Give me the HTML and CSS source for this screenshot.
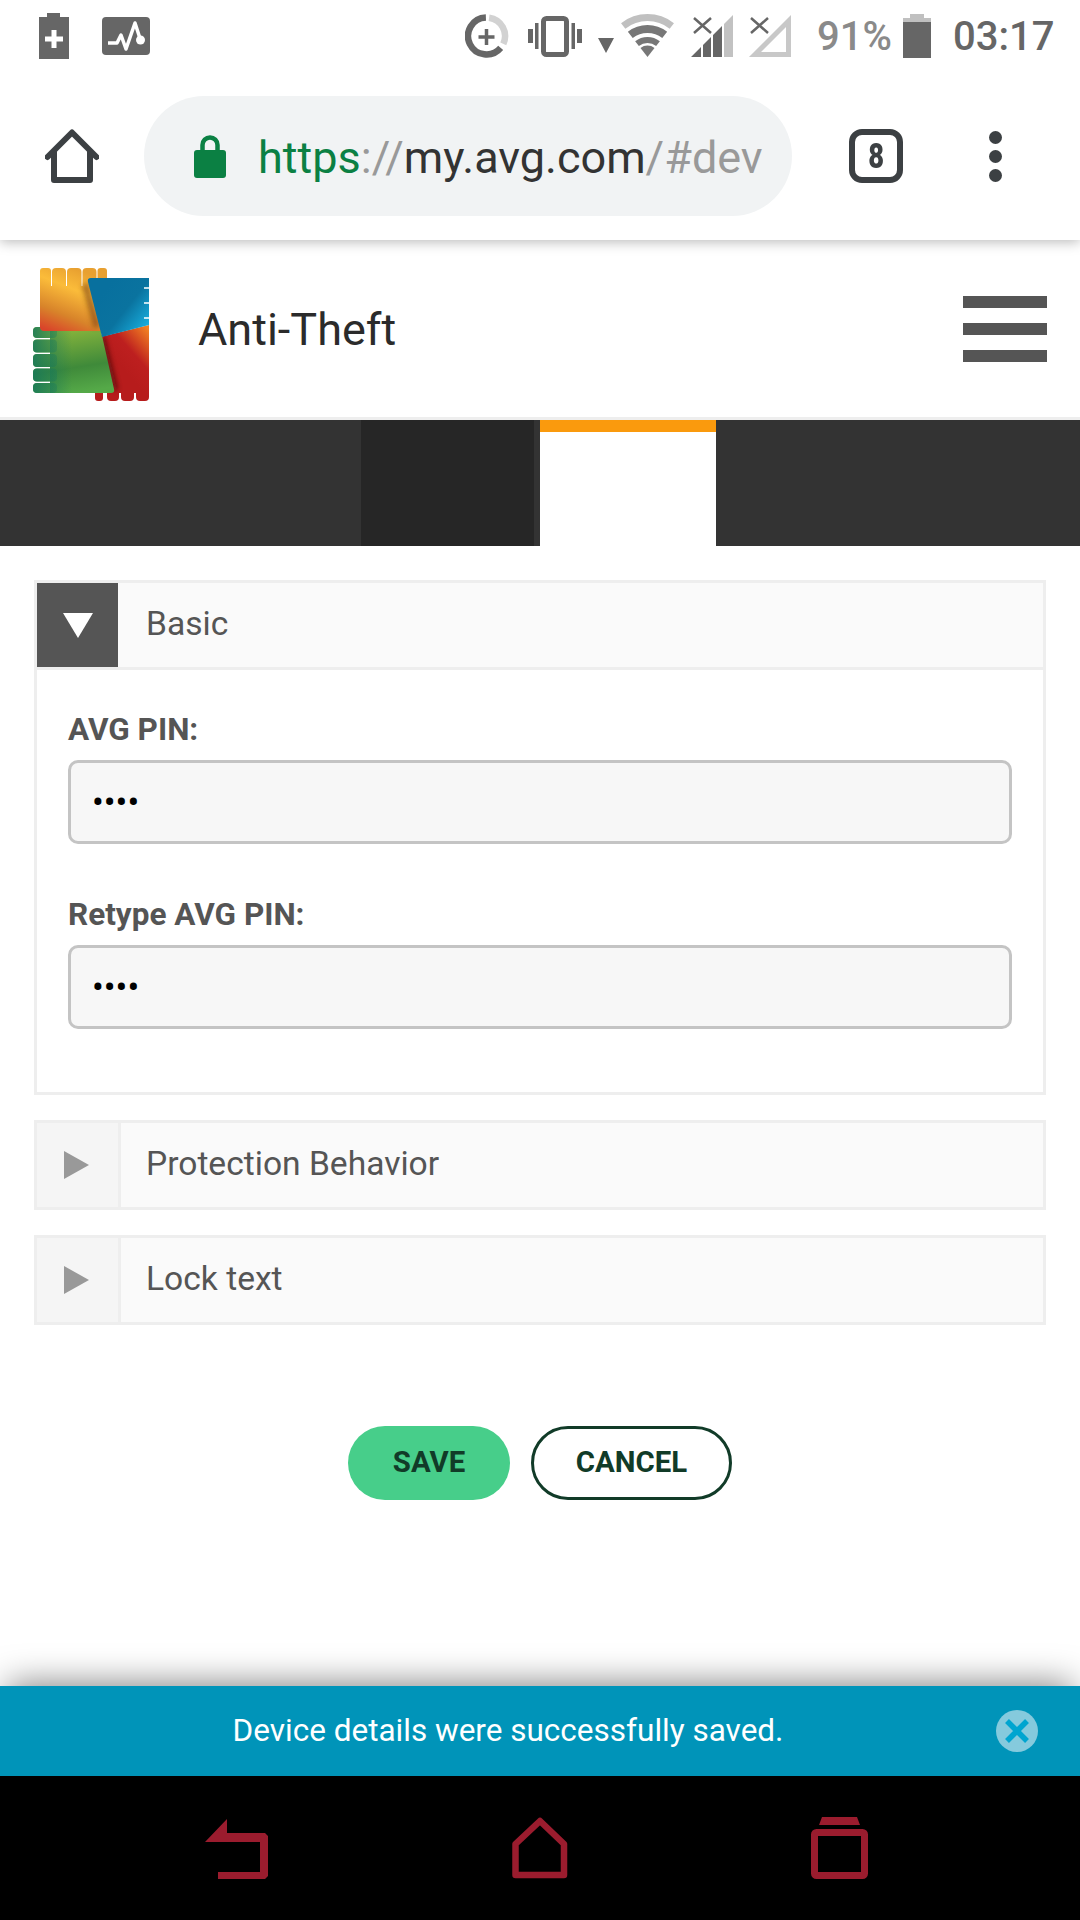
FILE: index.html
```html
<!doctype html>
<html>
    <head>
        <title>AVG Anti-Theft</title>
        <link rel="stylesheet" href="styles.css">
    </head>
    <body>
        <div class="status_bar">
            <svg class="status_left" viewBox="39 12 111 48">
                <path fill="#666" d="M47 13h13v4h9v42H39V17h8z"/>
                <path stroke="#fff" stroke-width="5" d="M54 30v18M45 39h18"/>
                <rect fill="#666" x="102" y="17" width="48" height="38" rx="4"/>
                <path fill="none" stroke="#fff" stroke-width="3.500" stroke-linejoin="round" d="M108 43h9l4-8 5 14 9-26 5.500 17"/>
                <circle fill="#fff" cx="140.500" cy="40" r="4.500"/>
            </svg>
            <svg class="status_icons" viewBox="465 12 326 48">
                <path fill="none" stroke="#666" stroke-width="6.500" d="M485.900 17.500A18.500 18.500 0 1 0 500.700 47.900"/>
                <path fill="none" stroke="#d2d2d2" stroke-width="6.500" d="M489.100 17.700A18.500 18.500 0 0 1 503.300 43.800"/>
                <path stroke="#666" stroke-width="3.500" d="M486.500 29v16M478.500 37h16"/>
                <rect fill="none" stroke="#666" stroke-width="5" x="543.500" y="18.500" width="23" height="36" rx="3"/>
                <path fill="#666" d="M528 29h5v14h-5zM535 23h3.500v26H535zM571.500 23h3.500v26h-3.500zM577 29h5v14h-5z"/>
                <path fill="#666" d="M598 38h16l-8 15z"/>
                <path fill="none" stroke="#c0c0c0" stroke-width="7" d="M623.200 25.900A39.500 39.500 0 0 1 671.800 25.900"/>
                <path fill="none" stroke="#777" stroke-width="8" d="M630.300 34.900A28 28 0 0 1 664.700 34.900"/>
                <path fill="none" stroke="#777" stroke-width="6" d="M637 43.600A17 17 0 0 1 658 43.600"/>
                <path fill="#777" d="M647.500 57l-7-9a11.500 11.500 0 0 1 14 0z"/>
                <path fill="#666" d="M691 57l10-10v10zM703 45l8-8v20h-8zM713 35l9-9v31h-9z"/>
                <path fill="#c2c2c2" d="M724 24l9-9v42h-9z"/>
                <path stroke="#666" stroke-width="2.500" d="M694 18l17 15M711 18l-17 15"/>
                <path fill="none" stroke="#c8c8c8" stroke-width="5" d="M755 54.500l33.500-33.500v33.500z"/>
                <path stroke="#666" stroke-width="2.500" d="M751 18l17 15M768 18l-17 15"/>
            </svg>
            <span class="status_pct">91%</span>
            <svg class="status_batt" viewBox="0 0 28 44">
                <path fill="#c0c0c0" d="M7 0h14v4h7v4H0V4h7z"/>
                <rect fill="#666" y="8" width="28" height="36"/>
            </svg>
            <span class="status_time">03:17</span>
        </div>

        <div class="toolbar">
            <svg class="tb_home" viewBox="45 129 54 54">
                <path fill="none" stroke="#3c4043" stroke-width="6" stroke-linecap="round" stroke-linejoin="round" d="M47.500 157L72 132.500 96.500 157M54 151v29h36v-29"/>
            </svg>
            <div class="omnibox">
                <svg class="omni_lock" viewBox="194 133 32 43">
                    <path fill="none" stroke="#0b8043" stroke-width="4.500" d="M202.500 150v-7a7.500 7.500 0 0 1 15 0v7"/>
                    <rect fill="#0b8043" x="194" y="148" width="32" height="28" rx="3"/>
                </svg>
                <div class="omni_url"><span class="url_green">https</span><span class="url_gray">://</span>my.avg.com<span class="url_gray">/#dev</span></div>
            </div>
            <div class="tb_tabs"><span>8</span></div>
            <div class="tb_menu"><i></i><i></i><i></i></div>
        </div>

        <div class="site_header">
            <svg class="logo" viewBox="33 268 116 133">
                <defs>
                    <linearGradient id="g_orange" gradientUnits="userSpaceOnUse" x1="75" y1="268" x2="50" y2="331">
                        <stop offset="0" stop-color="#e8a030"/>
                        <stop offset="0.3" stop-color="#fbbc3a"/>
                        <stop offset="0.7" stop-color="#d8842a"/>
                        <stop offset="1" stop-color="#d9442a"/>
                    </linearGradient>
                    <linearGradient id="g_blue" gradientUnits="userSpaceOnUse" x1="105" y1="290" x2="149" y2="325">
                        <stop offset="0" stop-color="#08709e"/>
                        <stop offset="0.5" stop-color="#0a739f"/>
                        <stop offset="1" stop-color="#19aede"/>
                    </linearGradient>
                    <linearGradient id="g_green" gradientUnits="userSpaceOnUse" x1="65" y1="331" x2="75" y2="393">
                        <stop offset="0" stop-color="#84b33c"/>
                        <stop offset="0.6" stop-color="#3f8a3a"/>
                        <stop offset="1" stop-color="#55a948"/>
                    </linearGradient>
                    <linearGradient id="g_green_fade" gradientUnits="userSpaceOnUse" x1="33" y1="360" x2="72" y2="360">
                        <stop offset="0" stop-color="#17785a" stop-opacity="0.85"/>
                        <stop offset="1" stop-color="#17785a" stop-opacity="0"/>
                    </linearGradient>
                    <linearGradient id="g_red" gradientUnits="userSpaceOnUse" x1="149" y1="330" x2="115" y2="360">
                        <stop offset="0" stop-color="#f28022"/>
                        <stop offset="0.6" stop-color="#bd1f1f"/>
                        <stop offset="1" stop-color="#b71c1c"/>
                    </linearGradient>
                    <filter id="soft" x="-30%" y="-30%" width="160%" height="160%">
                        <feGaussianBlur stdDeviation="2.500"/>
                    </filter>
                </defs>
                <g fill="url(#g_red)">
                    <path d="M100 337l49-12v68H100z"/>
                    <rect x="95" y="385" width="8" height="16" rx="3"/>
                    <rect x="107" y="385" width="12" height="16" rx="4"/>
                    <rect x="121" y="385" width="13" height="16" rx="4"/>
                    <rect x="136" y="385" width="13" height="16" rx="4"/>
                </g>
                <path fill="#3a0a0a" opacity="0.7" filter="url(#soft)" d="M100 337l14 54 4-2-13-52z"/>
                <g fill="url(#g_green)">
                    <path d="M50 331h51l13 58q1 4-3 4H50z"/>
                    <rect x="33" y="327" width="24" height="11" rx="4"/>
                    <rect x="33" y="339.500" width="24" height="13" rx="4"/>
                    <rect x="33" y="354" width="24" height="13" rx="4"/>
                    <rect x="33" y="368.500" width="24" height="13" rx="4"/>
                    <rect x="33" y="383" width="24" height="10" rx="4"/>
                </g>
                <g fill="url(#g_green_fade)">
                    <path d="M50 331h22v62H50z"/>
                    <rect x="33" y="327" width="24" height="11" rx="4"/>
                    <rect x="33" y="339.500" width="24" height="13" rx="4"/>
                    <rect x="33" y="354" width="24" height="13" rx="4"/>
                    <rect x="33" y="368.500" width="24" height="13" rx="4"/>
                    <rect x="33" y="383" width="24" height="10" rx="4"/>
                </g>
                <g fill="url(#g_orange)">
                    <path d="M40 286h67v45H44q-4 0-4-4z"/>
                    <rect x="40" y="268" width="11" height="28" rx="3"/>
                    <rect x="52" y="268" width="14" height="28" rx="4"/>
                    <rect x="67" y="268" width="14.500" height="28" rx="4"/>
                    <rect x="82.500" y="268" width="14" height="28" rx="4"/>
                    <rect x="97.500" y="268" width="9.500" height="28" rx="3"/>
                </g>
                <path fill="#6a3208" opacity="0.55" filter="url(#soft)" d="M88 282l-6 4 12 42 6-2z"/>
                <path fill="url(#g_blue)" d="M91 278h58v47l-47 12-14-55q-1-4 3-4z"/>
                <path stroke="#fff" stroke-width="1.500" d="M144 288h5M144 303h5M144 318h5"/>
            </svg>
            <div class="site_title">Anti-Theft</div>
            <div class="burger"><i></i><i></i><i></i></div>
        </div>

        <div class="tab_strip">
            <div class="tab_a"></div>
            <div class="tab_b"></div>
            <div class="tab_c"></div>
            <div class="tab_active"></div>
        </div>

        <div class="content">
            <div class="acc acc_open">
                <div class="acc_head">
                    <div class="acc_toggle"><i class="tri_down"></i></div>
                    <div class="acc_title">Basic</div>
                </div>
                <div class="acc_body">
                    <label class="fld_label">AVG PIN:</label>
                    <input class="fld_input" type="password" value="1234" readonly>
                    <label class="fld_label second">Retype AVG PIN:</label>
                    <input class="fld_input" type="password" value="1234" readonly>
                </div>
            </div>
            <div class="acc">
                <div class="acc_head">
                    <div class="acc_toggle"><i class="tri_right"></i></div>
                    <div class="acc_title">Protection Behavior</div>
                </div>
            </div>
            <div class="acc">
                <div class="acc_head">
                    <div class="acc_toggle"><i class="tri_right"></i></div>
                    <div class="acc_title">Lock text</div>
                </div>
            </div>
            <div class="buttons">
                <div class="btn btn_save">SAVE</div>
                <div class="btn btn_cancel">CANCEL</div>
            </div>
        </div>

        <div class="snackbar">
            <div class="snack_text">Device details were successfully saved.</div>
            <svg class="snack_close" viewBox="0 0 42 42">
                <circle fill="#85cadd" cx="21" cy="21" r="21"/>
                <path stroke="#00a5d0" stroke-width="5.500" d="M11 11l20 20M31 11L11 31"/>
            </svg>
        </div>

        <svg class="nav_bar" viewBox="0 1776 1080 144">
            <path fill="#9b1c2e" d="M227 1819l-22 23h55v30h-42v7h47l3-3v-40l-3-3h-38z"/>
            <path fill="none" stroke="#9b1c2e" stroke-width="6.500" stroke-linejoin="round" d="M515.500 1875v-31L540 1821l24 23v31z"/>
            <path fill="#9b1c2e" d="M822 1817h35l3 8h-41z"/>
            <rect fill="none" stroke="#9b1c2e" stroke-width="7" x="814.500" y="1832.500" width="50" height="43" rx="2"/>
        </svg>
    </body>
</html>
```

FILE: styles.css
```css
body {
    margin: 0;
    padding: 0;
    width: 1080px;
    height: 1920px;
    overflow: hidden;
    background-color: #fff;
    font-family: Roboto, sans-serif;
    display: flex;
    flex-direction: column;
}
i {
    display: block;
}

/* phone status bar */
.status_bar {
    height: 72px;
    flex: none;
    display: flex;
    align-items: center;
    padding-left: 39px;
    background-color: #fff;
    position: relative;
    z-index: 3;
}
.status_left {
    width: 111px;
    height: 48px;
    margin-right: 315px;
}
.status_icons {
    width: 326px;
    height: 48px;
}
.status_pct {
    margin-left: 26px;
    width: 86px;
    font-size: 40px;
    font-weight: 500;
    color: #8a8a8a;
}
.status_batt {
    width: 28px;
    height: 44px;
}
.status_time {
    margin-left: 22px;
    font-size: 40px;
    font-weight: 500;
    color: #666;
}

/* browser toolbar */
.toolbar {
    height: 168px;
    flex: none;
    display: flex;
    align-items: center;
    padding-left: 45px;
    background-color: #fff;
    box-shadow: 0 2px 12px rgba(0, 0, 0, 0.28);
    position: relative;
    z-index: 2;
}
.tb_home {
    width: 54px;
    height: 54px;
}
.omnibox {
    width: 648px;
    height: 120px;
    margin-left: 45px;
    border-radius: 60px;
    background-color: #f1f3f4;
    display: flex;
    align-items: center;
    padding-left: 50px;
    box-sizing: border-box;
}
.omni_lock {
    width: 32px;
    height: 43px;
    flex: none;
}
.omni_url {
    margin: 2px 0 0 32px;
    white-space: nowrap;
    font-size: 45px;
    color: #333;
}
.url_green {
    color: #0b8043;
}
.url_gray {
    color: #999;
}
.tb_tabs {
    width: 54px;
    height: 54px;
    margin-left: 57px;
    box-sizing: border-box;
    border: 6px solid #3c4043;
    border-radius: 13px;
    display: flex;
    align-items: center;
    justify-content: center;
    font-size: 35px;
    font-weight: 900;
    color: #3c4043;
}
.tb_tabs span {
    transform: scaleX(0.78);
}
.tb_menu {
    margin-left: 86px;
    display: flex;
    flex-direction: column;
    gap: 6px;
}
.tb_menu i {
    width: 13px;
    height: 13px;
    border-radius: 50%;
    background-color: #3c4043;
}

/* site header */
.site_header {
    height: 177px;
    flex: none;
    border-bottom: 3px solid #eee;
    display: flex;
    align-items: center;
    padding: 0 33px;
}
.logo {
    width: 116px;
    height: 133px;
    margin-top: 12px;
}
.site_title {
    margin: 2px 0 0 49px;
    font-size: 45px;
    color: #2b2b2b;
    flex: 1;
}
.burger {
    width: 84px;
    display: flex;
    flex-direction: column;
    gap: 15px;
}
.burger i {
    height: 12px;
    background-color: #555;
}

/* dark tabs */
.tab_strip {
    height: 126px;
    flex: none;
    display: flex;
    background-color: #333;
}
.tab_a {
    width: 361px;
}
.tab_b {
    width: 173px;
    background-color: #262626;
}
.tab_c {
    width: 6px;
}
.tab_active {
    width: 176px;
    background-color: #fff;
    border-top: 12px solid #fa9a0d;
}

/* accordion */
.content {
    flex: 1;
    padding: 34px 34px 0;
}
.acc {
    border: 3px solid #eee;
    margin-bottom: 25px;
}
.acc_head {
    height: 84px;
    display: flex;
    background-color: #fafafa;
}
.acc_open .acc_head {
    border-bottom: 3px solid #eee;
}
.acc_toggle {
    width: 81px;
    flex: none;
    display: flex;
    align-items: center;
    justify-content: center;
    background-color: #f5f5f5;
    border-right: 3px solid #eee;
}
.acc_open .acc_toggle {
    background-color: #555;
    border-right: 0;
}
.acc_title {
    margin-left: 25px;
    font-size: 33.6px;
    line-height: 82px;
    color: #555;
}
.acc_open .acc_title {
    margin-left: 28px;
}
.tri_down {
    border-left: 15px solid transparent;
    border-right: 15px solid transparent;
    border-top: 25px solid #fff;
}
.tri_right {
    border-top: 14px solid transparent;
    border-bottom: 14px solid transparent;
    border-left: 25px solid #999;
    margin-right: 3px;
}
.acc_body {
    padding: 42px 31px 63px;
}
.fld_label {
    display: block;
    font-size: 31.5px;
    font-weight: 700;
    line-height: 36px;
    color: #555;
    margin-bottom: 12px;
}
.fld_label.second {
    margin-top: 53px;
}
.fld_input {
    display: block;
    width: 100%;
    height: 84px;
    box-sizing: border-box;
    border: 3px solid #c4c4c4;
    border-radius: 10px;
    background-color: #f7f7f7;
    padding: 0 21px;
    font-family: Roboto, sans-serif;
    font-size: 35px;
    color: #000;
    outline: none;
}

/* form buttons */
.buttons {
    display: flex;
    justify-content: center;
    gap: 21px;
    margin-top: 101px;
}
.btn {
    height: 74px;
    box-sizing: border-box;
    border-radius: 37px;
    display: flex;
    align-items: center;
    justify-content: center;
    padding-bottom: 2px;
    font-size: 29.4px;
    font-weight: 700;
    color: #113b28;
}
.btn_save {
    width: 162px;
    background-color: #47ce8a;
}
.btn_cancel {
    width: 201px;
    border: 3px solid #113b28;
}

/* saved message */
.snackbar {
    height: 90px;
    flex: none;
    display: flex;
    align-items: center;
    padding: 0 42px 0 20px;
    background-color: #0094b9;
    box-shadow: 0 -10px 34px -8px rgba(0, 0, 0, 0.5);
    position: relative;
}
.snack_text {
    flex: 1;
    text-align: center;
    font-size: 31.5px;
    color: #fff;
    margin-bottom: 2px;
}
.snack_close {
    width: 42px;
    height: 42px;
    flex: none;
}

/* phone nav bar */
.nav_bar {
    display: block;
    width: 1080px;
    height: 144px;
    flex: none;
    background-color: #000;
    position: relative;
}
```
